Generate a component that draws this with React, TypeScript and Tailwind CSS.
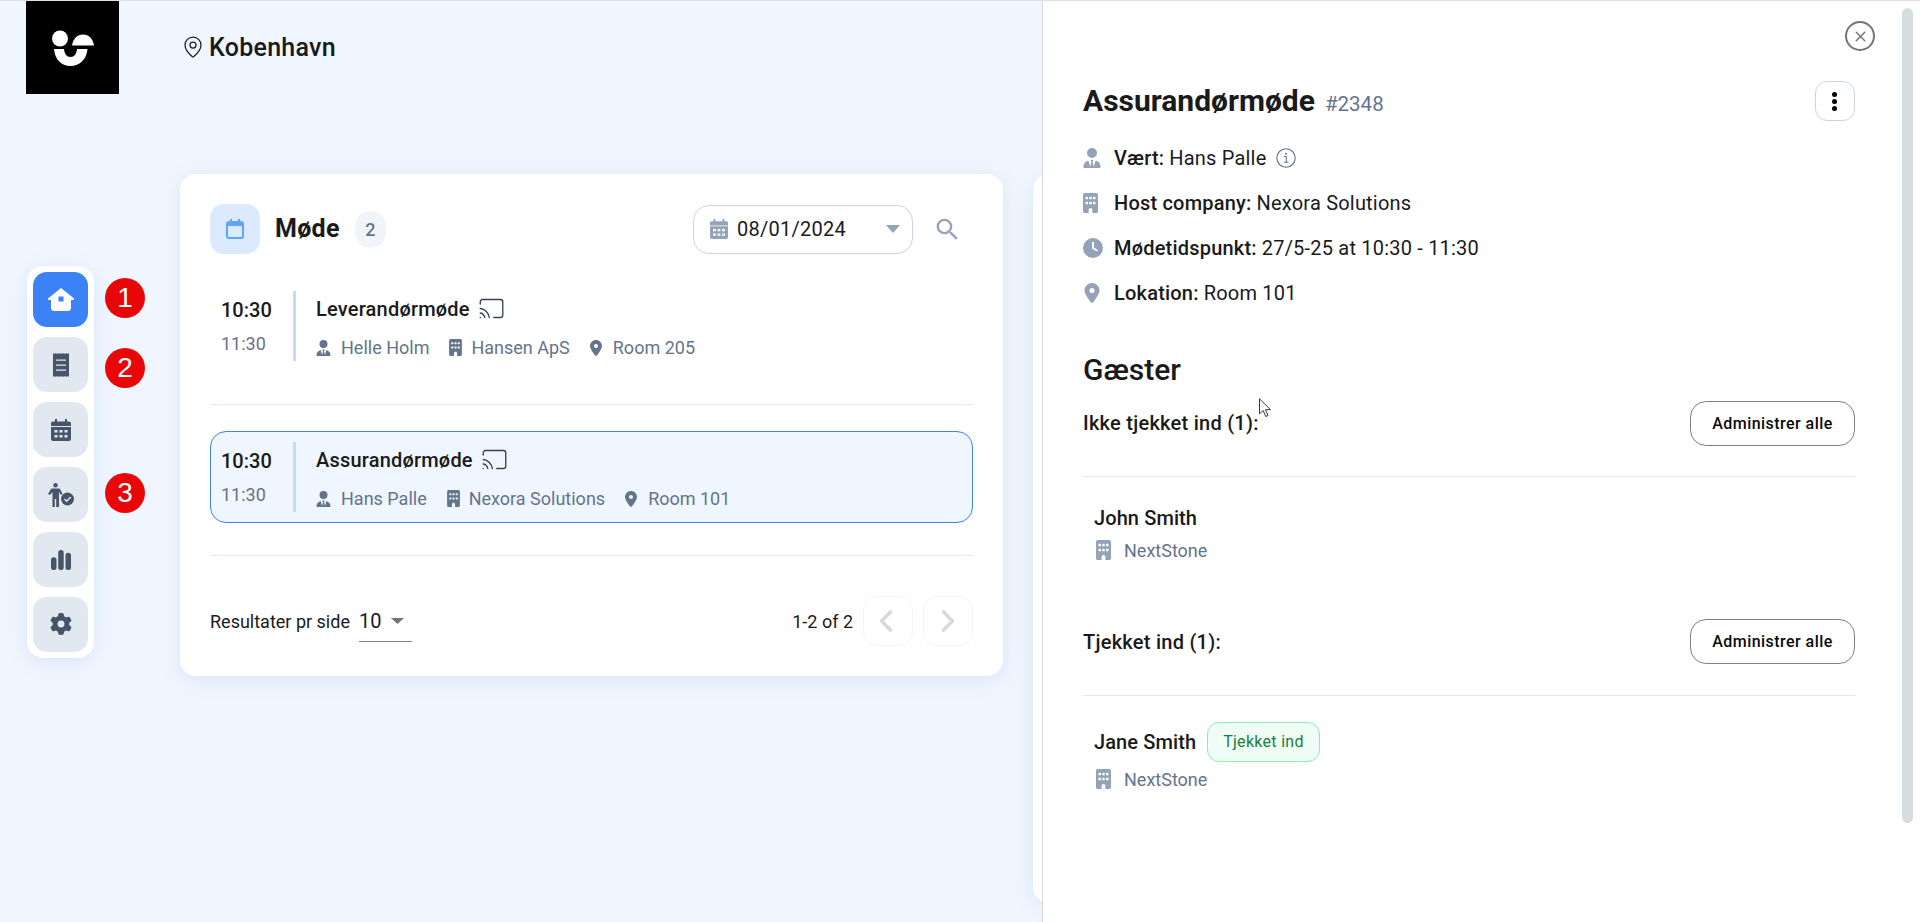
import React from 'react';
import { FaBuilding, FaClock, FaGear, FaLocationDot, FaUserTie } from 'react-icons/fa6';
import { MdSearch } from 'react-icons/md';
import { Cast, ChevronLeft, ChevronRight, MapPin, X } from 'lucide-react';

const Logo = () => (
  <svg viewBox="0 0 93 93" className="w-[93px] h-[93px]">
    <rect width="93" height="93" fill="#000" />
    <circle cx="34" cy="37.500" r="8" fill="#fff" />
    <path d="M46 44.500C47 38 51 33.500 57 33.500s10 4.500 11 11H46z" fill="#fff" />
    <path d="M28 48h10c.5 4.500 2.500 8 6.500 8s6-3.500 6.500-8h10.500c-.8 10-7.500 17-17 17S28.800 58 28 48z" fill="#fff" />
  </svg>
);

const HomeIcon = () => (
  <svg viewBox="0 0 26 23" className="w-[26px] h-[23px]">
    <path d="M13 0L26 10.500c.3.700-.2 1.500-1 1.500h-2v8c0 1.700-1.300 3-3 3H6c-1.700 0-3-1.300-3-3v-8H1c-.8 0-1.300-.8-1-1.500L13 0z" fill="#fff" />
    <rect x="10.500" y="8.500" width="5" height="5" fill="#3b82f6" />
  </svg>
);

const ReceiptIcon = () => (
  <svg viewBox="0 0 16 24" className="w-[16px] h-[24px]" fill="#475569">
    <path d="M0 0l1.300 1L2.700 0 4 1 5.300 0l1.400 1L8 0l1.300 1 1.400-1L12 1l1.300-1 1.400 1L16 0v24l-1.300-1-1.400 1-1.300-1-1.300 1-1.400-1L8 24l-1.300-1-1.400 1L4 23l-1.300 1-1.400-1L0 24V0z" />
    <path d="M3 6.500h10v1.300H3zM3 11.500h10v1.300H3zM3 16.500h10v1.300H3z" fill="#e2e8f0" />
  </svg>
);

// filled calendar with two rows of three holes, used in the nav and the date field
const CalendarFilled = ({ className, fill, hole }: { className: string; fill: string; hole: string }) => (
  <svg viewBox="0 0 20 22" className={className}>
    <path d="M4 0h2v2.500h8V0h2v2.500h2c1.100 0 2 .9 2 2V7H0V4.500c0-1.100.9-2 2-2h2V0z" fill={fill} />
    <path d="M0 8h20v12c0 1.100-.9 2-2 2H2c-1.100 0-2-.9-2-2V8z" fill={fill} />
    <g fill={hole}>
      <rect x="3.500" y="11" width="3" height="2.500" />
      <rect x="8.500" y="11" width="3" height="2.500" />
      <rect x="13.500" y="11" width="3" height="2.500" />
      <rect x="3.500" y="16" width="3" height="2.500" />
      <rect x="8.500" y="16" width="3" height="2.500" />
      <rect x="13.500" y="16" width="3" height="2.500" />
    </g>
  </svg>
);

const PersonCheckIcon = () => (
  <svg viewBox="0 0 26 24" className="w-[26px] h-[24px]">
    <circle cx="7.500" cy="2.200" r="2.200" fill="#475569" />
    <path d="M4.500 5.500h6c1 0 1.600.4 2 1.200l2 4.300-1.500 1-2-3v15H8.200v-8H6.800v8H4.500v-15l-2.500 3L0 11l2.500-4.300c.4-.8 1-1.200 2-1.200z" fill="#475569" />
    <circle cx="19.500" cy="16" r="6.500" fill="#475569" />
    <path d="M16.500 16l2.200 2.200 4-4.200" stroke="#e2e8f0" strokeWidth="1.600" fill="none" />
  </svg>
);

const BarsIcon = () => (
  <svg viewBox="0 0 20 20" className="w-[20px] h-[20px]" fill="#475569">
    <rect x="0" y="7.300" width="5.500" height="12.700" rx="2.500" />
    <rect x="7.200" y="0" width="5.500" height="20" rx="2.500" />
    <rect x="14.500" y="2.700" width="5.500" height="17.300" rx="2.500" />
  </svg>
);

const CalendarOutline = () => (
  <svg viewBox="0 0 18 20" className="w-[18px] h-[20px]" fill="none">
    <rect x="1" y="3" width="16" height="16" rx="2" stroke="#60a5fa" strokeWidth="2" />
    <path d="M1 3h16v4H1z" fill="#60a5fa" />
    <path d="M5 0v4M13 0v4" stroke="#60a5fa" strokeWidth="2" />
  </svg>
);

const InfoIcon = () => (
  <svg viewBox="0 0 20 20" className="w-[20px] h-[20px] ml-[9px]" fill="none">
    <circle cx="10" cy="10" r="9.200" stroke="#64748b" strokeWidth="1.100" />
    <path d="M8 8.500h2.300V14M8 14.300h4.500" stroke="#64748b" strokeWidth="1.100" />
    <circle cx="10" cy="5.800" r="1" fill="#64748b" />
  </svg>
);

const CursorIcon = () => (
  <svg viewBox="0 0 13 20" className="w-[13px] h-[20px]">
    <path d="M.5.800v15l3.700-3.300 2.500 6 2.300-1-2.500-5.800h5L.5.800z" fill="#fff" stroke="#222" strokeWidth=".9" />
  </svg>
);

const Marker = ({ n, top }: { n: number; top: string }) => (
  <div className={`absolute left-[78px] ${top} w-10 h-10 rounded-full bg-[#e80606] text-white flex items-center justify-center text-[28px] font-['Liberation_Sans',sans-serif]`}>
    {n}
  </div>
);

const NavButton = ({ active, children }: { active?: boolean; children: React.ReactNode }) => (
  <div className={`w-[55px] h-[55px] rounded-[14px] flex items-center justify-center ${active ? 'bg-[#3b82f6]' : 'bg-[#e2e8f0]'}`}>
    {children}
  </div>
);

const Sidebar = () => (
  <div className="relative ml-[27px] mt-[92px] shrink-0 self-start">
    <div className="w-[67px] bg-white rounded-2xl p-1.5 flex flex-col gap-2.5 shadow-[0_4px_20px_rgba(100,130,200,0.14)]">
      <NavButton active><HomeIcon /></NavButton>
      <NavButton><ReceiptIcon /></NavButton>
      <NavButton><CalendarFilled className="w-5 h-[22px]" fill="#475569" hole="#e2e8f0" /></NavButton>
      <NavButton><PersonCheckIcon /></NavButton>
      <NavButton><BarsIcon /></NavButton>
      <NavButton><FaGear className="w-[22px] h-[22px] -mt-px text-[#475569]" /></NavButton>
    </div>
    <Marker n={1} top="top-3" />
    <Marker n={2} top="top-[82px]" />
    <Marker n={3} top="top-[207px]" />
  </div>
);

const MeetingRow = ({ title, host, company, room, selected }: { title: string; host: string; company: string; room: string; selected?: boolean }) => (
  <div className={`h-[92px] rounded-2xl border flex items-center pl-[10px] ${selected ? 'bg-[#eff6ff] border-[#3b82f6]' : 'border-transparent'}`}>
    <div className="w-[72px] shrink-0">
      <div className="text-[20px] leading-7 font-medium text-[#1a1a1a]">10:30</div>
      <div className="text-[18px] leading-6 mt-2 text-[#6b7280]">11:30</div>
    </div>
    <div className="w-[3px] h-[70px] bg-[#bfdbfe] mr-5 shrink-0" />
    <div className="pt-[2px]">
      <div className="flex items-center h-7 gap-2 text-[20px] tracking-[0.2px] font-medium text-[#1a1a1a]">
        {title}
        <Cast className="w-[27px] h-[27px] text-[#374151]" strokeWidth={1.2} />
      </div>
      <div className="flex items-center gap-5 mt-[13px] text-[18px] leading-6 text-[#64748b]">
        <span className="flex items-center gap-2.5"><FaUserTie className="w-[15px] h-4" />{host}</span>
        <span className="flex items-center gap-[9px]"><FaBuilding className="w-[13px] h-[17px]" />{company}</span>
        <span className="-ml-px flex items-center gap-2.5"><FaLocationDot className="w-[14px] h-4" />{room}</span>
      </div>
    </div>
  </div>
);

const MeetingsCard = () => (
  <div className="w-[823px] shrink-0 bg-white rounded-2xl p-[30px] shadow-[0_4px_20px_rgba(100,130,200,0.14)]">
    <div className="flex items-center h-[50px]">
      <div className="w-[50px] h-[50px] rounded-[14px] bg-[#dbeafe] flex items-center justify-center">
        <CalendarOutline />
      </div>
      <h1 className="ml-[15px] text-[25px] tracking-[0.3px] font-bold text-[#1a1a1a]">Møde</h1>
      <span className="ml-[15px] w-[31px] h-[37px] rounded-full bg-[#f1f5f9] flex items-center justify-center text-[18px] font-medium text-[#64748b]">2</span>
      <div className="ml-auto w-[220px] h-[49px] rounded-2xl border border-[#cbd5e1] flex items-center pl-4 pr-3">
        <CalendarFilled className="w-[18px] h-5" fill="#94a3b8" hole="#fff" />
        <span className="ml-[9px] text-[20px] tracking-[0.25px] text-[#1a1a1a]">08/01/2024</span>
        <svg viewBox="0 0 14 8" className="ml-auto w-[14px] h-2" fill="#94a3b8"><path d="M0 0h14L7 8z" /></svg>
      </div>
      <MdSearch className="ml-5 mr-[11px] w-[29px] h-[29px] text-[#94a3b8]" />
    </div>

    <div className="mt-[26px]">
      <MeetingRow title="Leverandørmøde" host="Helle Holm" company="Hansen ApS" room="Room 205" />
      <div className="mt-8 mb-[26px] h-px bg-[#e2e8f0]" />
      <MeetingRow title="Assurandørmøde" host="Hans Palle" company="Nexora Solutions" room="Room 101" selected />
      <div className="mt-8 h-px bg-[#e2e8f0]" />
    </div>

    <div className="mt-10 h-[50px] flex items-center text-[18px] text-[#1a1a1a]">
      <span>Resultater pr side</span>
      <div className="ml-[9px] w-[53px] h-[41px] border-b border-[#808080] flex items-center">
        <span className="text-[20px]">10</span>
        <svg viewBox="0 0 13 6" className="ml-2.5 w-[13px] h-[6px]" fill="#757575"><path d="M0 0h13L6.500 6z" /></svg>
      </div>
      <span className="ml-auto">1-2 of 2</span>
      <div className="ml-2.5 w-[50px] h-[50px] rounded-[14px] border border-[#f1f5f9] flex items-center justify-center">
        <ChevronLeft className="w-9 h-9 mr-1 text-[#d9d9d9]" strokeWidth={2.4} />
      </div>
      <div className="ml-2.5 w-[50px] h-[50px] rounded-[14px] border border-[#f1f5f9] flex items-center justify-center">
        <ChevronRight className="w-9 h-9 text-[#d9d9d9]" strokeWidth={2.4} />
      </div>
    </div>
  </div>
);

const InfoRow = ({ icon, label, value, extra }: { icon: React.ReactNode; label: string; value: string; extra?: React.ReactNode }) => (
  <div className="h-[45px] flex items-center text-[20px] tracking-[0.2px] text-[#1a1a1a]">
    <span className="w-[31px] shrink-0 text-[#94a3b8] flex items-center">{icon}</span>
    <span className="font-medium">{label}</span>
    <span className="ml-[5px]">{value}</span>
    {extra}
  </div>
);

const GuestSection = ({ title, titleClass, dividerGap }: { title: string; titleClass?: string; dividerGap: string }) => (
  <>
    <div className="flex items-center justify-between">
      <span className={`text-[20px] tracking-[0.25px] font-medium text-[#1a1a1a] ${titleClass ?? ''}`}>{title}</span>
      <button className="w-[165px] h-[45px] rounded-2xl border border-[#808080] text-[16px] font-medium tracking-[0.45px] text-[#0a0a0a]">
        Administrer alle
      </button>
    </div>
    <div className={`${dividerGap} h-px bg-[#e2e8f0]`} />
  </>
);

const Company = () => (
  <div className="ml-[13px] flex items-center gap-[13px] h-6 text-[18px] text-[#64748b]">
    <FaBuilding className="w-[15px] h-5 text-[#94a3b8]" />
    NextStone
  </div>
);

const Drawer = () => (
  <div className="relative w-[878px] shrink-0 h-full bg-white border-l border-[#d9d9d9] pl-10 pr-[65px]">
    <div className="pt-5 flex justify-end">
      <div className="w-[30px] h-[30px] -mr-5 rounded-full border-2 border-[#757575] flex items-center justify-center">
        <X className="w-[17px] h-[17px] text-[#757575]" strokeWidth={2} />
      </div>
    </div>
    <div className="mt-[30px] h-10 flex items-center">
      <h2 className="text-[30px] font-bold text-[#1a1a1a] leading-10">Assurandørmøde</h2>
      <span className="ml-[10px] mt-[7px] text-[20.500px] text-[#64748b]">#2348</span>
      <div className="ml-auto w-10 h-10 rounded-xl border border-[#cbd5e1] flex flex-col items-center justify-center gap-[2px]">
        <span className="w-[5px] h-[5px] mr-px rounded-full bg-black" />
        <span className="w-[5px] h-[5px] mr-px rounded-full bg-black" />
        <span className="w-[5px] h-[5px] mr-px rounded-full bg-black" />
      </div>
    </div>
    <div className="mt-3.5">
      <InfoRow icon={<FaUserTie className="w-[18px] h-5" />} label="Vært:" value="Hans Palle" extra={<InfoIcon />} />
      <InfoRow icon={<FaBuilding className="w-[15px] h-5" />} label="Host company:" value="Nexora Solutions" />
      <InfoRow icon={<FaClock className="w-5 h-5" />} label="Mødetidspunkt:" value="27/5-25 at 10:30 - 11:30" />
      <InfoRow icon={<FaLocationDot className="w-[18px] h-5" />} label="Lokation:" value="Room 101" />
    </div>
    <h3 className="mt-[35px] h-10 leading-10 text-[30px] font-medium text-[#1a1a1a]">Gæster</h3>

    <div className="mt-[11px]">
      <GuestSection title="Ikke tjekket ind (1):" titleClass="-mt-0.5" dividerGap="mt-[30px]" />
    </div>
    <div className="mt-[27px] ml-[11px] text-[20px] tracking-[0.1px] leading-7 font-medium text-[#1a1a1a]">John Smith</div>
    <div className="mt-1.5"><Company /></div>

    <div className="mt-[57px]">
      <GuestSection title="Tjekket ind (1):" dividerGap="mt-[31px]" />
    </div>
    <div className="mt-[26px] ml-[11px] h-10 flex items-center">
      <span className="text-[20px] tracking-[0.1px] font-medium text-[#1a1a1a]">Jane Smith</span>
      <span className="ml-[11px] h-10 px-[15px] rounded-xl border border-[#86efac] bg-[#f0fdf4] text-[16px] tracking-[0.3px] text-[#15803d] flex items-center">Tjekket ind</span>
    </div>
    <div className="mt-[5px]"><Company /></div>

    {/* scrollbar */}
    <div className="absolute right-[7px] top-[7px] w-[11px] h-[815px] rounded-md bg-[#d5dde0]" />
    {/* mouse pointer caught in the screenshot */}
    <div className="absolute left-[216px] top-[397px]"><CursorIcon /></div>
  </div>
);

export default function App() {
  return (
    <div className="w-[1920px] h-[922px] overflow-hidden flex bg-[#eff6ff] border-t border-[#e0e0e0] font-['Roboto',sans-serif]">
      <div className="w-[1042px] shrink-0 overflow-hidden">
        <div className="h-[93px] flex items-start pl-[26px]">
          <Logo />
          <div className="ml-[62px] h-[92px] flex items-center gap-1">
            <MapPin className="w-6 h-6 text-[#1a1a1a]" strokeWidth={1.25} />
            <span className="mt-0.5 text-[25px] tracking-[0.27px] font-medium text-[#1a1a1a]">Kobenhavn</span>
          </div>
        </div>
        <div className="flex items-start pt-20">
          <Sidebar />
          <div className="ml-[86px] shrink-0">
            <MeetingsCard />
          </div>
          <div className="ml-[30px] w-[300px] h-[729px] shrink-0 bg-white rounded-2xl shadow-[0_4px_20px_rgba(100,130,200,0.14)]" />
        </div>
      </div>
      <Drawer />
    </div>
  );
}
